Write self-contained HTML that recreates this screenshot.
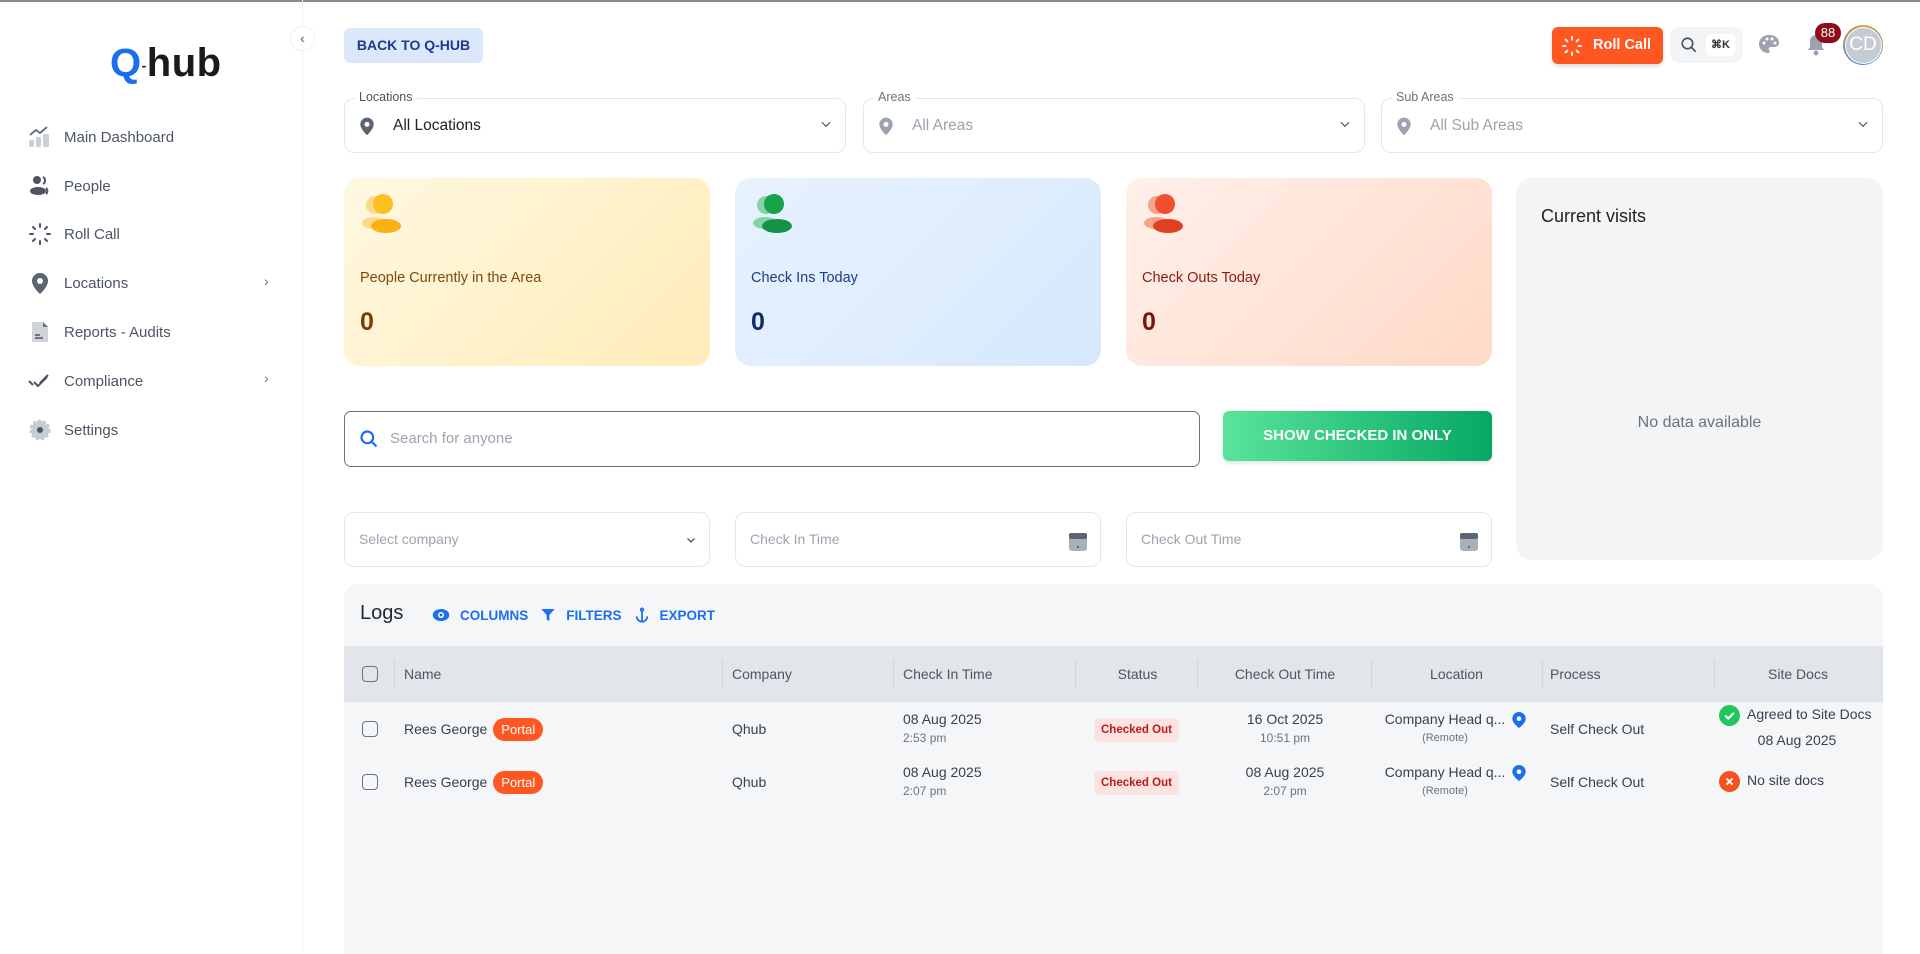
<!DOCTYPE html>
<html><head><meta charset="utf-8"><style>
*{box-sizing:border-box;margin:0;padding:0}
body{width:1920px;height:951px;overflow:hidden;background:#fff;font-family:"Liberation Sans",sans-serif;color:#374151;position:relative}
.a{position:absolute}
.nav{position:absolute;left:28px;display:flex;align-items:center;font-size:15px;color:#4b5563}
.nav svg{width:24px;height:24px;margin-right:12px}
.chev{position:absolute;left:264px;color:#6b7280;font-size:14px}
.sel{position:absolute;top:98px;height:55px;border:1px solid #e5e7eb;border-radius:10px;background:#fff}
.sel .lab{position:absolute;top:-9px;left:10px;background:#fff;padding:0 4px;font-size:12.5px;color:#4b5563}
.sel .txt{position:absolute;left:48px;top:18px;font-size:15.5px}
.sel svg.pin{position:absolute;left:12px;top:16px}
.sel .dd{position:absolute;right:12px;top:18px}
.card{position:absolute;top:178px;height:188px;border-radius:16px;width:366px}
.card .t{position:absolute;left:16px;top:92px;font-size:14.5px}
.card .n{position:absolute;left:16px;top:130px;font-size:25px;font-weight:bold}
.card svg{position:absolute;left:16px;top:16px}
.f{position:absolute;top:512px;height:55px;border:1px solid #e5e7eb;border-radius:10px;font-size:14px;color:#9ca3af}
.f span{position:absolute;left:14px;top:18px}
.th{position:absolute;top:666px;font-size:14px;color:#4b5563}
.dv{position:absolute;top:660px;width:1px;height:28px;background:#d1d5db}
.td{position:absolute;font-size:14px;color:#374151}
.sm{font-size:12px;color:#6b7280}
.cb{position:absolute;left:362px;width:16px;height:16px;border:1.5px solid #6b7280;border-radius:4px}
.portal{display:inline-block;background:#ff5722;color:#fff;border-radius:12px;padding:4px 8px;font-size:13px;margin-left:6px}
.st{position:absolute;left:1094px;background:#fde2e2;color:#b91c1c;font-size:11.5px;font-weight:bold;padding:6px 7px;border-radius:5px}
</style></head><body>
<div class="a" style="left:0;top:0;width:1920px;height:2px;background:#8a8a8a"></div>
<!-- sidebar -->
<div class="a" style="left:302px;top:0;width:1px;height:951px;background:#f0f1f3"></div>
<div class="a" style="left:290px;top:26px;width:25px;height:25px;border-radius:50%;border:1px solid #eef0f2;background:#fff;color:#4b5563;font-size:14px;text-align:center;line-height:23px">‹</div>
<div class="a" style="left:110px;top:41px;font-size:40px;font-weight:bold;letter-spacing:0.5px"><span style="color:#1a6ff0">Q</span><span style="color:#222;font-size:14px;vertical-align:middle">-</span><span style="color:#1a1a1a">hub</span></div>

<div class="nav" style="top:125px"><svg viewBox="0 0 24 24"><rect x="1" y="15" width="5" height="7" rx="1.5" fill="#cbd0d6"/><rect x="8" y="12" width="5" height="10" rx="1.5" fill="#cbd0d6"/><rect x="15" y="9" width="6" height="13" rx="1.5" fill="#cbd0d6"/><path d="M2 10l6-5 4 3 7-6" stroke="#6b7280" stroke-width="2" fill="none"/></svg>Main Dashboard</div>
<div class="nav" style="top:174px"><svg viewBox="0 0 24 24"><circle cx="9" cy="6" r="4" fill="#4b5563"/><ellipse cx="10" cy="17" rx="8" ry="4" fill="#4b5563"/><path d="M15 3a4 4 0 010 7M18 14a4 4 0 010 6" stroke="#4b5563" stroke-width="2" fill="none"/></svg>People</div>
<div class="nav" style="top:222px"><svg viewBox="0 0 24 24" stroke="#4b5563" stroke-width="2" stroke-linecap="round"><path d="M12 2v3M12 19v3M2 12h3M19 12h3M5 5l2 2M17 17l2 2M5 19l2-2M17 7l2-2"/></svg>Roll Call</div>
<div class="nav" style="top:271px"><svg viewBox="0 0 24 24"><path d="M12 2a8 8 0 00-8 8c0 6 8 13 8 13s8-7 8-13a8 8 0 00-8-8z" fill="#5b6472"/><circle cx="12" cy="10" r="3" fill="#fff"/></svg>Locations</div>
<div class="chev" style="top:273px">›</div>
<div class="nav" style="top:320px"><svg viewBox="0 0 24 24"><path d="M4 2h11l5 5v15H4z" fill="#d1d5db"/><path d="M15 2v5h5" fill="#6b7280"/><path d="M7 15h5M7 18h8" stroke="#4b5563" stroke-width="1.6"/></svg>Reports - Audits</div>
<div class="nav" style="top:369px"><svg viewBox="0 0 24 24" fill="none" stroke="#4b5563" stroke-width="2"><path d="M1 12l4 4M6 13l4 4 9-9M12 14l8-8"/></svg>Compliance</div>
<div class="chev" style="top:370px">›</div>
<div class="nav" style="top:418px"><svg viewBox="0 0 24 24"><circle cx="12" cy="12" r="9" fill="#c7ccd2" stroke="#c7ccd2" stroke-width="3" stroke-dasharray="3 2"/><circle cx="12" cy="12" r="3" fill="#4b5563"/></svg>Settings</div>

<!-- top bar -->
<div class="a" style="left:344px;top:28px;width:139px;height:35px;background:#dbe7fb;border-radius:6px;color:#1e3a8a;font-size:14px;font-weight:bold;text-align:center;line-height:35px">BACK TO Q-HUB</div>
<div class="a" style="left:1552px;top:27px;width:111px;height:37px;background:#ff5722;border-radius:6px;color:#fff;font-size:14.5px;font-weight:bold;line-height:37px;box-shadow:0 2px 4px rgba(0,0,0,.15)"><svg class="a" style="left:9px;top:8px" width="22" height="22" viewBox="0 0 24 24" stroke="#fff" stroke-width="2" stroke-linecap="round"><path d="M12 2v3M12 19v3M2 12h3M19 12h3M5 5l2 2M17 17l2 2M5 19l2-2M17 7l2-2"/></svg><span style="margin-left:41px">Roll Call</span></div>
<div class="a" style="left:1670px;top:27px;width:73px;height:36px;background:#f3f4f6;border-radius:10px"><svg class="a" style="left:10px;top:9px" width="18" height="18" viewBox="0 0 24 24" fill="none" stroke="#4b5563" stroke-width="2.2"><circle cx="10" cy="10" r="7"/><path d="M15 15l6 6"/></svg><div class="a" style="left:36px;top:7px;width:29px;height:22px;background:#fff;border-radius:5px;font-size:11px;font-weight:bold;text-align:center;line-height:22px;color:#333">⌘K</div></div>
<svg class="a" style="left:1757px;top:33px" width="24" height="24" viewBox="0 0 24 24"><path d="M12 2C6 2 2 6 2 11s4 9 9 9c2 0 2-2 1-3s0-3 2-3h3c3 0 5-2 5-4 0-5-4-8-10-8z" fill="#9ca3af"/><circle cx="7" cy="10" r="1.5" fill="#fff"/><circle cx="10" cy="6" r="1.5" fill="#fff"/><circle cx="15" cy="6" r="1.5" fill="#fff"/><circle cx="18" cy="10" r="1.5" fill="#fff"/></svg>
<svg class="a" style="left:1804px;top:33px" width="24" height="24" viewBox="0 0 24 24"><path d="M12 2a6 6 0 00-6 6v6l-2 3h16l-2-3V8a6 6 0 00-6-6z" fill="#9ca3af"/><circle cx="12" cy="20" r="2.5" fill="#9ca3af"/></svg>
<div class="a" style="left:1815px;top:23px;width:26px;height:20px;background:#8b0d1a;border-radius:10px;color:#fff;font-size:13px;text-align:center;line-height:20px">88</div>
<div class="a" style="left:1843px;top:25px;width:40px;height:40px;border-radius:50%;background:conic-gradient(#d4a537,#3b82f6,#d4a537);padding:1.5px"><div style="width:100%;height:100%;border-radius:50%;background:#c5cad3;border:1.5px solid #fff;color:#fff;font-size:19px;text-align:center;line-height:34px">CD</div></div>

<!-- selects -->
<div class="sel" style="left:344px;width:502px"><div class="lab">Locations</div><svg class="pin" width="20" height="22" viewBox="0 0 24 24"><path d="M12 2a8 8 0 00-8 8c0 6 8 13 8 13s8-7 8-13a8 8 0 00-8-8z" fill="#5b6472"/><circle cx="12" cy="10" r="3" fill="#fff"/></svg><div class="txt" style="color:#222">All Locations</div><svg class="dd" width="14" height="14" viewBox="0 0 24 24" fill="none" stroke="#4b5563" stroke-width="2"><path d="M5 9l7 7 7-7"/></svg></div>
<div class="sel" style="left:863px;width:502px"><div class="lab" style="color:#6b7280">Areas</div><svg class="pin" width="20" height="22" viewBox="0 0 24 24"><path d="M12 2a8 8 0 00-8 8c0 6 8 13 8 13s8-7 8-13a8 8 0 00-8-8z" fill="#9ca3af"/><circle cx="12" cy="10" r="3" fill="#fff"/></svg><div class="txt" style="color:#9ca3af">All Areas</div><svg class="dd" width="14" height="14" viewBox="0 0 24 24" fill="none" stroke="#4b5563" stroke-width="2"><path d="M5 9l7 7 7-7"/></svg></div>
<div class="sel" style="left:1381px;width:502px"><div class="lab" style="color:#6b7280">Sub Areas</div><svg class="pin" width="20" height="22" viewBox="0 0 24 24"><path d="M12 2a8 8 0 00-8 8c0 6 8 13 8 13s8-7 8-13a8 8 0 00-8-8z" fill="#9ca3af"/><circle cx="12" cy="10" r="3" fill="#fff"/></svg><div class="txt" style="color:#9ca3af">All Sub Areas</div><svg class="dd" width="14" height="14" viewBox="0 0 24 24" fill="none" stroke="#4b5563" stroke-width="2"><path d="M5 9l7 7 7-7"/></svg></div>

<!-- cards -->
<div class="card" style="left:344px;background:linear-gradient(135deg,#fff8e1,#ffecb8)"><svg width="42" height="40" viewBox="0 0 42 40"><circle cx="15" cy="11" r="9" fill="#fcd98a"/><ellipse cx="14" cy="29" rx="12" ry="6" fill="#fcd98a"/><circle cx="23" cy="10" r="10" fill="#fbbf24"/><ellipse cx="26" cy="32" rx="15" ry="7" fill="#f8b214"/></svg><div class="t" style="color:#7c4a0c">People Currently in the Area</div><div class="n" style="color:#7a3e00">0</div></div>
<div class="card" style="left:735px;background:linear-gradient(135deg,#e8f2ff,#d6e8fd)"><svg width="42" height="40" viewBox="0 0 42 40"><circle cx="15" cy="11" r="9" fill="#86d3a8"/><ellipse cx="14" cy="29" rx="12" ry="6" fill="#86d3a8"/><circle cx="23" cy="10" r="10" fill="#16a34a"/><ellipse cx="26" cy="32" rx="15" ry="7" fill="#15924a"/></svg><div class="t" style="color:#1e3a8a">Check Ins Today</div><div class="n" style="color:#0f2a6b">0</div></div>
<div class="card" style="left:1126px;background:linear-gradient(135deg,#fff0ea,#ffd9c7)"><svg width="42" height="40" viewBox="0 0 42 40"><circle cx="15" cy="11" r="9" fill="#f7a28a"/><ellipse cx="14" cy="29" rx="12" ry="6" fill="#f7a28a"/><circle cx="23" cy="10" r="10" fill="#ef4f2c"/><ellipse cx="26" cy="32" rx="15" ry="7" fill="#e04020"/></svg><div class="t" style="color:#8b1a10">Check Outs Today</div><div class="n" style="color:#7a1408">0</div></div>
<div class="a" style="left:1516px;top:178px;width:367px;height:382px;background:#f3f4f6;border-radius:16px"><div class="a" style="left:25px;top:28px;font-size:18px;color:#222">Current visits</div><div class="a" style="left:0;width:100%;top:236px;text-align:center;font-size:16px;color:#6b7280">No data available</div></div>

<!-- search -->
<div class="a" style="left:344px;top:411px;width:856px;height:56px;border:1px solid #6b7280;border-radius:7px"><svg class="a" style="left:14px;top:17px" width="20" height="20" viewBox="0 0 24 24" fill="none" stroke="#1a6ff0" stroke-width="2.6"><circle cx="10" cy="10" r="7"/><path d="M15 15l6 6"/></svg><div class="a" style="left:45px;top:18px;font-size:15px;color:#9ca3af">Search for anyone</div></div>
<div class="a" style="left:1223px;top:411px;width:269px;height:50px;border-radius:6px;background:linear-gradient(90deg,#5ae49a,#05a864);color:#fff;font-size:15px;font-weight:bold;text-align:center;line-height:50px;box-shadow:0 2px 4px rgba(0,0,0,.12)">SHOW CHECKED IN ONLY</div>

<!-- filters -->
<div class="f" style="left:344px;width:366px"><span>Select company</span><svg class="a" style="right:12px;top:21px" width="12" height="12" viewBox="0 0 24 24" fill="none" stroke="#4b5563" stroke-width="2.5"><path d="M5 9l7 7 7-7"/></svg></div>
<div class="f" style="left:735px;width:366px"><span>Check In Time</span><svg class="a" style="right:12px;top:17px" width="20" height="22" viewBox="0 0 20 22"><rect x="1" y="3" width="18" height="18" rx="3" fill="#aab0b8"/><rect x="1" y="3" width="18" height="6" rx="2" fill="#5b6472"/><circle cx="10" cy="17" r="1" fill="#4b5563"/></svg></div>
<div class="f" style="left:1126px;width:366px"><span>Check Out Time</span><svg class="a" style="right:12px;top:17px" width="20" height="22" viewBox="0 0 20 22"><rect x="1" y="3" width="18" height="18" rx="3" fill="#aab0b8"/><rect x="1" y="3" width="18" height="6" rx="2" fill="#5b6472"/><circle cx="10" cy="17" r="1" fill="#4b5563"/></svg></div>

<!-- logs -->
<div class="a" style="left:344px;top:584px;width:1539px;height:370px;background:#f5f6f8;border-radius:14px 14px 0 0"></div>
<div class="a" style="left:360px;top:602px;font-size:20px;color:#1f2937">Logs</div>
<div class="a" style="left:432px;top:606px;font-size:13.5px;color:#1a6ff0;font-weight:bold;display:flex;align-items:center">
<svg width="18" height="14" viewBox="0 0 24 18"><ellipse cx="12" cy="9" rx="11" ry="8" fill="#1a6ff0"/><circle cx="12" cy="9" r="4" fill="#fff"/><circle cx="12" cy="9" r="2" fill="#1a6ff0"/></svg><span style="margin:0 12px 0 10px">COLUMNS</span>
<svg width="16" height="16" viewBox="0 0 24 24"><path d="M2 3h20l-8 9v9l-4-2v-7z" fill="#1a6ff0"/></svg><span style="margin:0 12px 0 10px">FILTERS</span>
<svg width="16" height="18" viewBox="0 0 24 24" fill="none" stroke="#1a6ff0" stroke-width="2.6"><circle cx="12" cy="4" r="2"/><path d="M12 6v15M4 14a8 8 0 0016 0"/></svg><span style="margin-left:10px">EXPORT</span></div>
<div class="a" style="left:344px;top:646px;width:1539px;height:56px;background:#e2e5ea"></div>
<div class="cb" style="top:666px"></div>
<div class="dv" style="left:394px"></div><div class="th" style="left:404px">Name</div>
<div class="dv" style="left:722px"></div><div class="th" style="left:732px">Company</div>
<div class="dv" style="left:893px"></div><div class="th" style="left:903px">Check In Time</div>
<div class="dv" style="left:1075px"></div><div class="th" style="left:1075px;width:125px;text-align:center">Status</div>
<div class="dv" style="left:1197px"></div><div class="th" style="left:1200px;width:170px;text-align:center">Check Out Time</div>
<div class="dv" style="left:1371px"></div><div class="th" style="left:1371px;width:171px;text-align:center">Location</div>
<div class="dv" style="left:1542px"></div><div class="th" style="left:1550px">Process</div>
<div class="dv" style="left:1714px"></div><div class="th" style="left:1714px;width:168px;text-align:center">Site Docs</div>

<!-- row1 -->
<div class="cb" style="top:721px"></div>
<div class="td" style="left:404px;top:718px">Rees George<span class="portal">Portal</span></div>
<div class="td" style="left:732px;top:721px">Qhub</div>
<div class="td" style="left:903px;top:711px">08 Aug 2025<br><span class="sm" style="line-height:22px">2:53 pm</span></div>
<div class="st" style="top:718px">Checked Out</div>
<div class="td" style="left:1200px;width:170px;text-align:center;top:711px">16 Oct 2025<br><span class="sm" style="line-height:22px">10:51 pm</span></div>
<div class="td" style="left:1380px;top:711px;width:130px;text-align:center;white-space:nowrap">Company Head q...<br><span class="sm" style="font-size:11px;line-height:22px">(Remote)</span></div>
<svg class="a" style="left:1511px;top:711px" width="16" height="18" viewBox="0 0 24 26"><path d="M12 1a10 10 0 00-10 10c0 7 10 14 10 14s10-7 10-14A10 10 0 0012 1z" fill="#1a6ff0"/><circle cx="12" cy="11" r="3.5" fill="#fff"/></svg>
<div class="td" style="left:1550px;top:721px">Self Check Out</div>
<svg class="a" style="left:1719px;top:705px" width="21" height="21" viewBox="0 0 24 24"><circle cx="12" cy="12" r="12" fill="#22c55e"/><path d="M7 12l3.5 3.5L17 9" stroke="#fff" stroke-width="2.4" fill="none"/></svg>
<div class="td" style="left:1747px;top:706px">Agreed to Site Docs</div>
<div class="td" style="left:1712px;width:170px;text-align:center;top:732px">08 Aug 2025</div>
<!-- row2 -->
<div class="cb" style="top:774px"></div>
<div class="td" style="left:404px;top:771px">Rees George<span class="portal">Portal</span></div>
<div class="td" style="left:732px;top:774px">Qhub</div>
<div class="td" style="left:903px;top:764px">08 Aug 2025<br><span class="sm" style="line-height:22px">2:07 pm</span></div>
<div class="st" style="top:771px">Checked Out</div>
<div class="td" style="left:1200px;width:170px;text-align:center;top:764px">08 Aug 2025<br><span class="sm" style="line-height:22px">2:07 pm</span></div>
<div class="td" style="left:1380px;top:764px;width:130px;text-align:center;white-space:nowrap">Company Head q...<br><span class="sm" style="font-size:11px;line-height:22px">(Remote)</span></div>
<svg class="a" style="left:1511px;top:764px" width="16" height="18" viewBox="0 0 24 26"><path d="M12 1a10 10 0 00-10 10c0 7 10 14 10 14s10-7 10-14A10 10 0 0012 1z" fill="#1a6ff0"/><circle cx="12" cy="11" r="3.5" fill="#fff"/></svg>
<div class="td" style="left:1550px;top:774px">Self Check Out</div>
<svg class="a" style="left:1719px;top:771px" width="21" height="21" viewBox="0 0 24 24"><circle cx="12" cy="12" r="12" fill="#f4511e"/><path d="M8.5 8.5l7 7M15.5 8.5l-7 7" stroke="#fff" stroke-width="2.2"/></svg>
<div class="td" style="left:1747px;top:772px">No site docs</div>
</body></html>
